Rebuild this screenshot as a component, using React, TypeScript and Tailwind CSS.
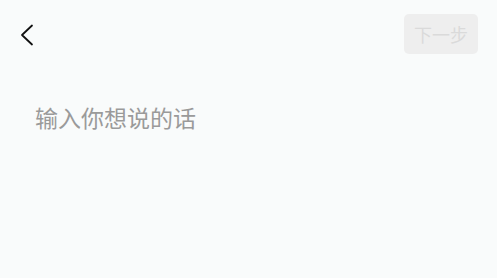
import React from "react";

export default function App() {
  return (
    <div
      className="w-[497px] h-[278px] bg-[#f9fbfb] flex flex-col"
      style={{ fontFamily: '"Noto Sans CJK SC", "Noto Sans", sans-serif' }}
    >
      <div className="flex items-start justify-between pt-[14px] pl-[20px] pr-[19px]">
        <div className="pt-[10px]">
          <svg width="14" height="22" viewBox="0 0 14 22" fill="none">
            <path d="M12 1.5 L2 11 L12 20.5" stroke="#111" strokeWidth="1.8" strokeLinecap="round" strokeLinejoin="round" />
          </svg>
        </div>
        <div className="w-[74px] h-[40px] rounded-[5px] bg-[#eeeeee] flex items-center justify-center text-[18px] text-[#dadada] leading-none">
          下一步
        </div>
      </div>
      <div className="pl-[35px] pt-[48px] text-[23px] leading-[30px] text-[#9a9a9a]">
        输入你想说的话
      </div>
    </div>
  );
}
